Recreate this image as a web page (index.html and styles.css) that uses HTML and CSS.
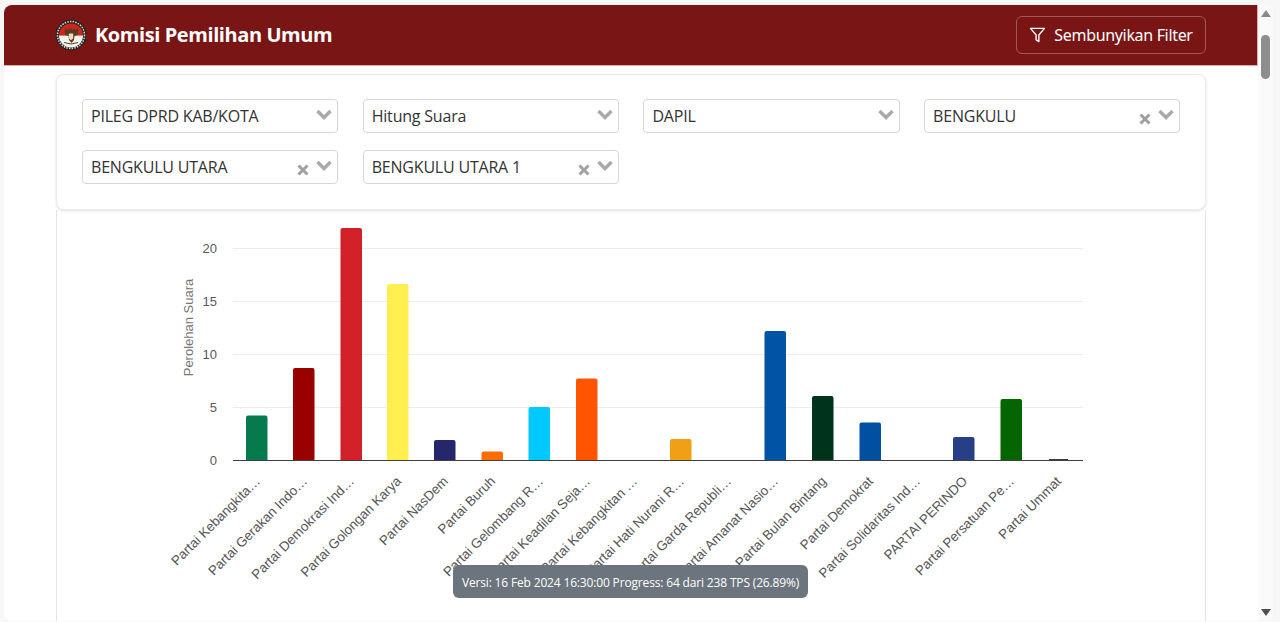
FILE: index.html
```html
<!DOCTYPE html>
<html lang="id">
<head>
<meta charset="utf-8">
<title>Komisi Pemilihan Umum</title>
<link rel="stylesheet" href="styles.css">
</head>
<body>
<div class="window">
  <div class="viewport">
    <header class="topbar">
      <div class="brand">
        <svg class="logo" width="32" height="32" viewBox="0 0 32 32" aria-hidden="true">
          <circle cx="16" cy="16" r="15.500" fill="#2b2423"/>
          <circle cx="16" cy="16" r="13.500" fill="none" stroke="#d8d4d0" stroke-width="1.500" stroke-dasharray="1.500 1.200"/>
          <path d="M4 16.500a12 12 0 0 1 24 0z" fill="#d3241c"/>
          <path d="M4 16.500a12 12 0 0 0 24 0z" fill="#f5f2ee"/>
          <path d="M16 8.500l1.500 2.500 2-2 .5 2 2.500-2 1 3-1 4-3 1-.5 4-2.500 3-2.500-3-.5-4-3-1-1-4 1-3 2.500 2 .5-2 2 2z" fill="#5b3b20"/>
          <path d="M13.800 14.500h4.400v5l-2.200 1.800-2.200-1.800z" fill="#e8dcc0"/>
          <path d="M9 23.500l7 1.500 7-1.500" fill="none" stroke="#5b3b20" stroke-width="1"/>
        </svg>
        <span class="brand-name">Komisi Pemilihan Umum</span>
      </div>
      <button class="filter-toggle" type="button">
        <svg width="17" height="16" viewBox="0 0 24 23" fill="none" stroke="#fff" stroke-width="2" stroke-linejoin="round" aria-hidden="true"><path d="M2 2h20l-8 9.500V21l-4-2.500v-7z"/></svg>
        <span>Sembunyikan Filter</span>
      </button>
    </header>

    <main class="content">
      <section class="filters">
        <div class="select"><span class="value">PILEG DPRD KAB/KOTA</span><svg class="chev" width="16" height="12" viewBox="0 0 16 12"><path d="M1.500 2l6.500 6.500L14.500 2" fill="none" stroke="#a9a9a9" stroke-width="3.400"/></svg></div>
        <div class="select"><span class="value">Hitung Suara</span><svg class="chev" width="16" height="12" viewBox="0 0 16 12"><path d="M1.500 2l6.500 6.500L14.500 2" fill="none" stroke="#a9a9a9" stroke-width="3.400"/></svg></div>
        <div class="select"><span class="value">DAPIL</span><svg class="chev" width="16" height="12" viewBox="0 0 16 12"><path d="M1.500 2l6.500 6.500L14.500 2" fill="none" stroke="#a9a9a9" stroke-width="3.400"/></svg></div>
        <div class="select"><span class="value">BENGKULU</span><svg class="clear" width="12" height="12" viewBox="0 0 12 12"><path d="M1.500 1.500l9 9m0-9l-9 9" stroke="#a0a0a0" stroke-width="3"/></svg><svg class="chev" width="16" height="12" viewBox="0 0 16 12"><path d="M1.500 2l6.500 6.500L14.500 2" fill="none" stroke="#a9a9a9" stroke-width="3.400"/></svg></div>
        <div class="select"><span class="value">BENGKULU UTARA</span><svg class="clear" width="12" height="12" viewBox="0 0 12 12"><path d="M1.500 1.500l9 9m0-9l-9 9" stroke="#a0a0a0" stroke-width="3"/></svg><svg class="chev" width="16" height="12" viewBox="0 0 16 12"><path d="M1.500 2l6.500 6.500L14.500 2" fill="none" stroke="#a9a9a9" stroke-width="3.400"/></svg></div>
        <div class="select"><span class="value">BENGKULU UTARA 1</span><svg class="clear" width="12" height="12" viewBox="0 0 12 12"><path d="M1.500 1.500l9 9m0-9l-9 9" stroke="#a0a0a0" stroke-width="3"/></svg><svg class="chev" width="16" height="12" viewBox="0 0 16 12"><path d="M1.500 2l6.500 6.500L14.500 2" fill="none" stroke="#a9a9a9" stroke-width="3.400"/></svg></div>
      </section>

      <section class="chart-card">
        <svg class="chart" width="1148" height="411" viewBox="57 211 1148 411">
          <g class="grid">
            <path d="M233 248.500H1083M233 301.500H1083M233 354.500H1083M233 407.500H1083"/>
          </g>
          <g class="ticks">
            <text x="217" y="465">0</text>
            <text x="217" y="412">5</text>
            <text x="217" y="359">10</text>
            <text x="217" y="306">15</text>
            <text x="217" y="253">20</text>
          </g>
          <text class="axis-title" transform="translate(193 327.500) rotate(-90)">Perolehan Suara</text>
          <g>
            <path fill="#047a4e" d="M246 460V417.500a2 2 0 0 1 2-2h17.500a2 2 0 0 1 2 2V460z"/>
            <path fill="#990000" d="M293 460V370a2 2 0 0 1 2-2h17.500a2 2 0 0 1 2 2V460z"/>
            <path fill="#d3212a" d="M340.500 460V230a2 2 0 0 1 2-2h17.500a2 2 0 0 1 2 2V460z"/>
            <path fill="#fff04f" d="M387 460V286a2 2 0 0 1 2-2h17.500a2 2 0 0 1 2 2V460z"/>
            <path fill="#26266c" d="M434 460V442a2 2 0 0 1 2-2h17.500a2 2 0 0 1 2 2V460z"/>
            <path fill="#ff6d00" d="M481.500 460V453.500a2 2 0 0 1 2-2h17.500a2 2 0 0 1 2 2V460z"/>
            <path fill="#00c9ff" d="M528.500 460V409a2 2 0 0 1 2-2h17.500a2 2 0 0 1 2 2V460z"/>
            <path fill="#ff5500" d="M576 460V380.500a2 2 0 0 1 2-2h17.500a2 2 0 0 1 2 2V460z"/>
            <path fill="#f19f17" d="M670 460V441a2 2 0 0 1 2-2h17.500a2 2 0 0 1 2 2V460z"/>
            <path fill="#0053a5" d="M764.500 460V333a2 2 0 0 1 2-2h17.500a2 2 0 0 1 2 2V460z"/>
            <path fill="#00331c" d="M812 460V398a2 2 0 0 1 2-2h17.500a2 2 0 0 1 2 2V460z"/>
            <path fill="#004fa0" d="M859.500 460V424.500a2 2 0 0 1 2-2h17.500a2 2 0 0 1 2 2V460z"/>
            <path fill="#273f87" d="M953 460V439a2 2 0 0 1 2-2h17.500a2 2 0 0 1 2 2V460z"/>
            <path fill="#056500" d="M1000.500 460V401a2 2 0 0 1 2-2h17.500a2 2 0 0 1 2 2V460z"/>
            <path fill="#3c3c3c" d="M1049 460V459h19v1z"/>
          </g>
          <path class="baseline" d="M233 460.500H1083"/>
          <g class="xlabels">
            <text transform="translate(261 482) rotate(-45)">Partai Kebangkita…</text>
            <text transform="translate(308 482) rotate(-45)">Partai Gerakan Indo…</text>
            <text transform="translate(355 482) rotate(-45)">Partai Demokrasi Ind…</text>
            <text transform="translate(402 482) rotate(-45)">Partai Golongan Karya</text>
            <text transform="translate(449 482) rotate(-45)">Partai NasDem</text>
            <text transform="translate(496 482) rotate(-45)">Partai Buruh</text>
            <text transform="translate(544 482) rotate(-45)">Partai Gelombang R…</text>
            <text transform="translate(591 482) rotate(-45)">Partai Keadilan Seja…</text>
            <text transform="translate(638 482) rotate(-45)">Partai Kebangkitan …</text>
            <text transform="translate(685 482) rotate(-45)">Partai Hati Nurani R…</text>
            <text transform="translate(732 482) rotate(-45)">Partai Garda Republi…</text>
            <text transform="translate(779 482) rotate(-45)">Partai Amanat Nasio…</text>
            <text transform="translate(827 482) rotate(-45)">Partai Bulan Bintang</text>
            <text transform="translate(874 482) rotate(-45)">Partai Demokrat</text>
            <text transform="translate(921 482) rotate(-45)">Partai Solidaritas Ind…</text>
            <text transform="translate(968 482) rotate(-45)">PARTAI PERINDO</text>
            <text transform="translate(1015 482) rotate(-45)">Partai Persatuan Pe…</text>
            <text transform="translate(1062 482) rotate(-45)">Partai Ummat</text>
          </g>
        </svg>
        <div class="version-tip">Versi: 16 Feb 2024 16:30:00 Progress: 64 dari 238 TPS (26.89%)</div>
      </section>
    </main>
  </div>

  <div class="scrollbar">
    <svg width="10" height="7" viewBox="0 0 10 7"><path d="M0 7L5 0l5 7z" fill="#8a8a8a"/></svg>
    <div class="thumb"></div>
    <svg class="arrow-down" width="10" height="7" viewBox="0 0 10 7"><path d="M0 0l5 7 5-7z" fill="#505050"/></svg>
  </div>
</div>
</body>
</html>
```
FILE: styles.css
```css
* { box-sizing: border-box; }
html, body { margin: 0; height: 100%; overflow: hidden; background: #f7f7f7; }
body { padding: 5px 7px 0 4px; font-family: "Open Sans", "Noto Sans", sans-serif; color: #333; }

.window { display: flex; height: 616px; background: #fff; border-radius: 8px; overflow: hidden; }
.viewport { flex: 1; min-width: 0; display: flex; flex-direction: column; }

.topbar { height: 61px; flex: none; display: flex; align-items: center; justify-content: space-between; padding: 0 51px 0 51px; background: #7a1515; border-bottom: 1px solid #e8a9a9; border-right: 1px solid #e8a9a9; }
.brand { display: flex; align-items: center; gap: 8px; margin-top: -1px; }
.logo { display: block; }
.brand-name { color: #fff; font-size: 20px; font-weight: 700; letter-spacing: -.42px; }
.filter-toggle { width: 190px; height: 38px; display: flex; align-items: center; justify-content: center; gap: 8px; margin-top: -1px; padding: 0; background: transparent; border: 1px solid #a25858; border-radius: 6px; color: #fff; font: 400 16px "Noto Sans", "Open Sans", sans-serif; letter-spacing: -.33px; }

.content { flex: 1; padding: 8px 52px 0; display: flex; flex-direction: column; min-height: 0; }
.filters { flex: none; height: 136px; display: grid; grid-template-columns: repeat(4, 256.4px); column-gap: 24.3px; row-gap: 17px; align-content: start; padding: 24px 25px 0; background: #fff; border: 1px solid #ececec; border-radius: 8px; box-shadow: 0 1px 3px rgba(0,0,0,.12); position: relative; z-index: 1; }
.select { height: 34px; display: flex; align-items: center; padding: 0 5px 0 8px; border: 1px solid #d6d6d6; border-radius: 4px; background: #fff; font-size: 16px; color: #333; }
.value { flex: 1; white-space: nowrap; letter-spacing: -.2px; }
.clear { margin-right: 7px; margin-top: 6px; }
.chev { margin-top: -2px; }

.chart-card { flex: 1; min-height: 0; position: relative; border: 1px solid #e4e4e4; border-top: 0; border-bottom: 0; }
.chart { display: block; position: absolute; left: 0; top: 1px; }
.grid path { stroke: #ececec; stroke-width: 1; fill: none; }
.ticks text { font: 13px "Liberation Sans", Arial, sans-serif; fill: #595959; text-anchor: end; }
.axis-title { font: 13px "Liberation Sans", Arial, sans-serif; fill: #777; text-anchor: middle; }
.baseline { stroke: #3f3f3f; stroke-width: 1; fill: none; }
.xlabels text { font: 13.400px "Liberation Sans", Arial, sans-serif; fill: #555; text-anchor: end; }

.version-tip { position: absolute; left: 396px; top: 355px; width: 355px; height: 33px; padding-top: 1px; display: flex; align-items: center; justify-content: center; background: #6c757d; border-radius: 6px; color: #fff; font-size: 12px; letter-spacing: -.16px; white-space: nowrap; }

.scrollbar { flex: none; width: 15px; background: #fafafa; display: flex; flex-direction: column; align-items: center; padding-top: 5px; }
.thumb { width: 9px; height: 44px; margin-top: 18px; background: #8d8d8d; border-radius: 5px; }
.arrow-down { margin-top: auto; margin-bottom: 5px; }
```
